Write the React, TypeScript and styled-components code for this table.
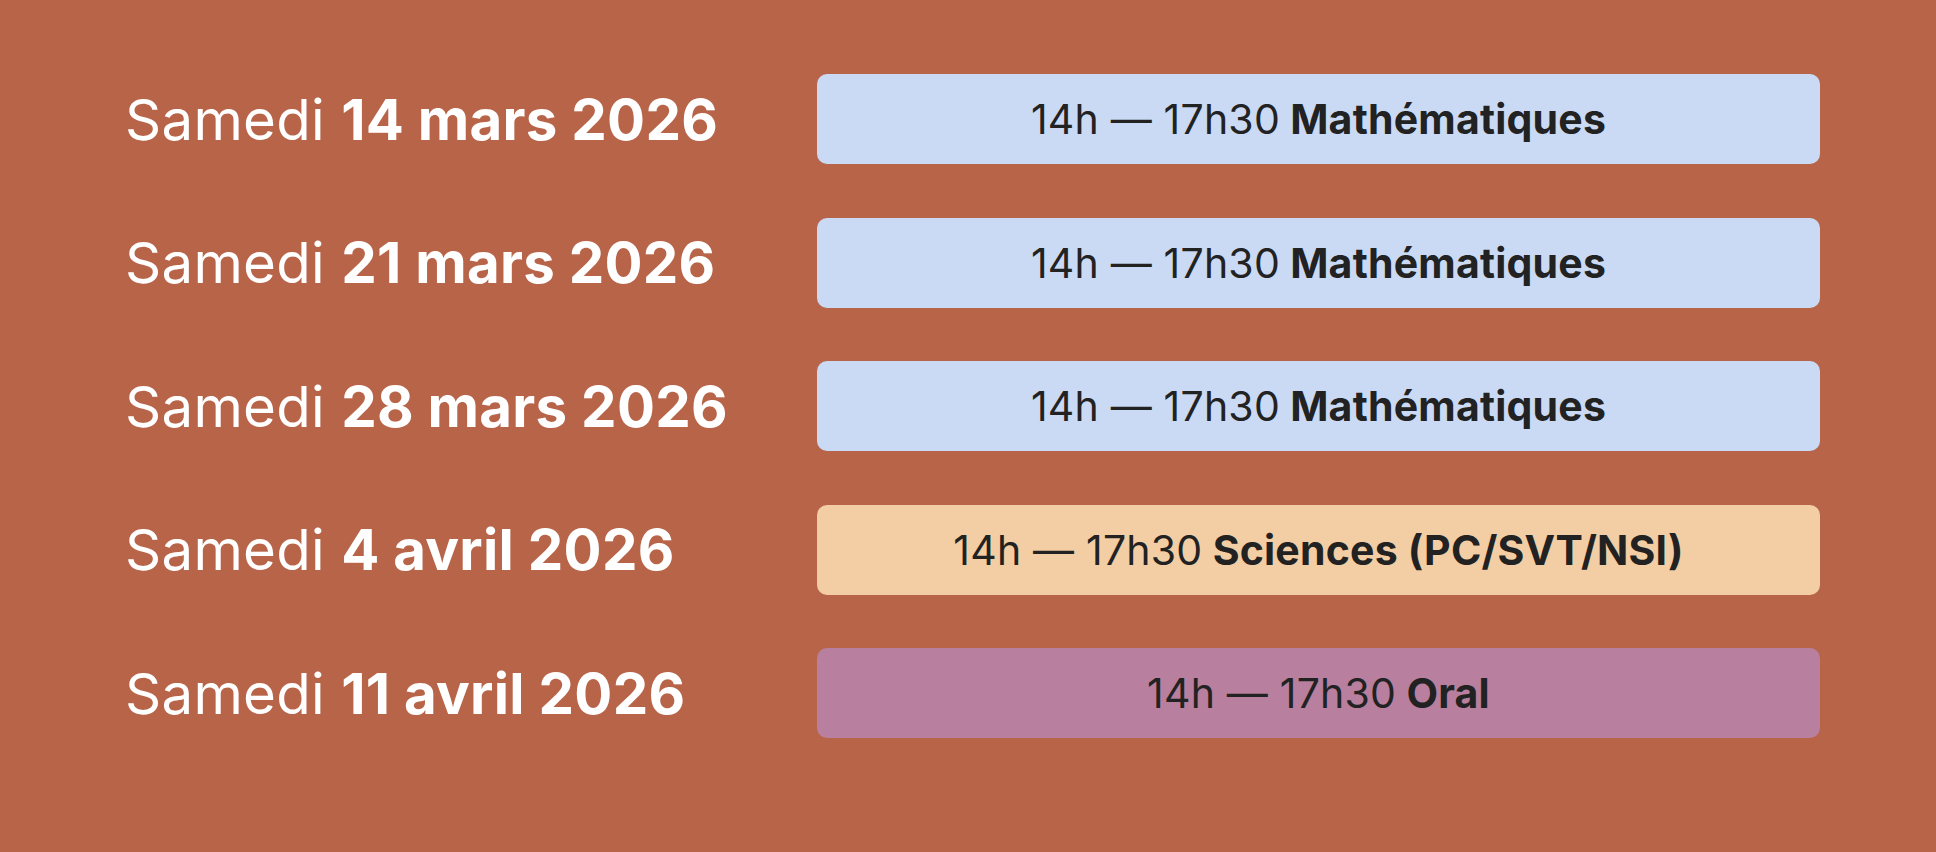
import React from 'react';
import styled, { createGlobalStyle } from 'styled-components';

const GlobalStyle = createGlobalStyle`
  html, body {
    margin: 0;
    padding: 0;
    background-color: #b86449;
  }
  body {
    font-family: Inter, 'Noto Sans', sans-serif;
  }
`;

const Page = styled.div`
  width: 1936px;
  height: 852px;
  box-sizing: border-box;
  padding: 74px 116px 0 125px;
  background-color: #b86449;
`;

const Schedule = styled.div`
  display: grid;
  grid-template-columns: 692px 1003px;
  row-gap: 53.5px;
  align-items: center;
`;

const DateLabel = styled.div`
  padding-top: 2px;
  color: #ffffff;
  font-size: 56.4px;
  font-weight: 400;
  letter-spacing: 0.005em;
  line-height: 1;
  white-space: nowrap;

  & strong {
    font-weight: 700;
  }
`;

type Kind = 'math' | 'science' | 'oral';

const colors: Record<Kind, string> = {
  math: '#cadaf4',
  science: '#f3cda3',
  oral: '#b87f9e',
};

const Slot = styled.div<{ $kind: Kind }>`
  height: 90px;
  border-radius: 10px;
  background-color: ${(p) => colors[p.$kind]};
  display: flex;
  align-items: center;
  justify-content: center;
  color: #222222;
  font-size: 41px;
  font-weight: 400;
  letter-spacing: 0.005em;
  white-space: nowrap;

  & strong {
    font-weight: 700;
    margin-left: 0.25em;
  }
`;

const sessions: { day: string; subject: string; kind: Kind }[] = [
  { day: '14 mars 2026', subject: 'Mathématiques', kind: 'math' },
  { day: '21 mars 2026', subject: 'Mathématiques', kind: 'math' },
  { day: '28 mars 2026', subject: 'Mathématiques', kind: 'math' },
  { day: '4 avril 2026', subject: 'Sciences (PC/SVT/NSI)', kind: 'science' },
  { day: '11 avril 2026', subject: 'Oral', kind: 'oral' },
];

export default function App() {
  return (
    <>
      <GlobalStyle />
      <Page>
        <Schedule>
          {sessions.map((s) => (
            <React.Fragment key={s.day}>
              <DateLabel>
                Samedi <strong>{s.day}</strong>
              </DateLabel>
              <Slot $kind={s.kind}>
                14h — 17h30<strong>{s.subject}</strong>
              </Slot>
            </React.Fragment>
          ))}
        </Schedule>
      </Page>
    </>
  );
}
